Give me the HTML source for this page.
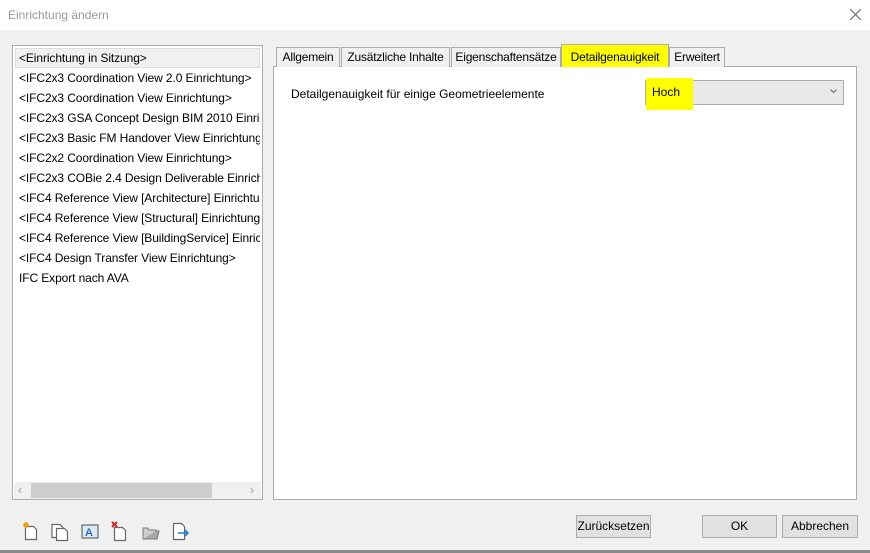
<!DOCTYPE html>
<html><head><style>
*{margin:0;padding:0;box-sizing:border-box}
body{width:870px;height:553px;background:#f0f0f0;font-family:"Liberation Sans",sans-serif;font-size:12px;color:#000;position:relative;overflow:hidden}
.abs{position:absolute}
.title{left:0;top:0;width:870px;height:30px;background:#fff}
.list{left:12px;top:45px;width:251px;height:455px;background:#fff;border:1px solid #adadad;overflow:hidden}
.item{position:absolute;left:6px;white-space:nowrap;height:20px;line-height:20px;width:241px;overflow:hidden;letter-spacing:-0.1px}
.tab{position:absolute;top:47px;height:20px;line-height:19px;border:1px solid #acacac;border-bottom:none;background:#f0f0f0;text-align:center;font-size:12px;white-space:nowrap;letter-spacing:-0.2px}
.btn{position:absolute;top:515px;height:23px;border:1px solid #adadad;background:#e1e1e1;text-align:center;line-height:21px}
</style></head><body>
<div class="abs title"><span class="abs" style="left:8px;top:8px;color:#999;font-size:12px">Einrichtung ändern</span>
<svg class="abs" style="left:850px;top:9px" width="11" height="11"><path d="M0 0L11 11M11 0L0 11" stroke="#666" stroke-width="1.1"/></svg></div>
<div class="abs list">
<div class="abs" style="left:2px;top:2px;width:245px;height:20px;background:#f0f0f0;border:1px solid #ddd"></div>
<div class="item" style="top:2px">&lt;Einrichtung in Sitzung&gt;</div>
<div class="item" style="top:22px">&lt;IFC2x3 Coordination View 2.0 Einrichtung&gt;</div>
<div class="item" style="top:42px">&lt;IFC2x3 Coordination View Einrichtung&gt;</div>
<div class="item" style="top:62px">&lt;IFC2x3 GSA Concept Design BIM 2010 Einric</div>
<div class="item" style="top:82px">&lt;IFC2x3 Basic FM Handover View Einrichtung:</div>
<div class="item" style="top:102px">&lt;IFC2x2 Coordination View Einrichtung&gt;</div>
<div class="item" style="top:122px">&lt;IFC2x3 COBie 2.4 Design Deliverable Einricht</div>
<div class="item" style="top:142px">&lt;IFC4 Reference View [Architecture] Einrichtu</div>
<div class="item" style="top:162px">&lt;IFC4 Reference View [Structural] Einrichtung:</div>
<div class="item" style="top:182px">&lt;IFC4 Reference View [BuildingService] Einrich</div>
<div class="item" style="top:202px">&lt;IFC4 Design Transfer View Einrichtung&gt;</div>
<div class="item" style="top:222px">IFC Export nach AVA</div>
<div class="abs" style="left:1px;top:436px;width:247px;height:17px;background:#f0f0f0"></div>
<div class="abs" style="left:18px;top:437px;width:181px;height:15px;background:#cdcdcd"></div>
<span class="abs" style="left:5px;top:437px;color:#999">‹</span><span class="abs" style="left:237px;top:437px;color:#999">›</span>
</div>
<div class="abs" style="left:273px;top:66px;width:584px;height:434px;background:#fff;border:1px solid #adadad"></div>
<div class="tab" style="left:276px;width:64px">Allgemein</div>
<div class="tab" style="left:341px;width:109px">Zusätzliche Inhalte</div>
<div class="tab" style="left:451px;width:110px">Eigenschaftensätze</div>
<div class="tab" style="left:561px;top:44px;height:23px;width:108px;background:#ffff00;line-height:25px">Detailgenauigkeit</div>
<div class="tab" style="left:669px;width:56px">Erweitert</div>
<div class="abs" style="left:291px;top:87px">Detailgenauigkeit für einige Geometrieelemente</div>
<div class="abs" style="left:645px;top:80px;width:199px;height:25px;background:#e9e9e9;border:1px solid #acacac"></div>
<div class="abs" style="left:646px;top:78px;width:47px;height:32px;background:#ffff00"></div>
<div class="abs" style="left:652px;top:85px">Hoch</div>
<svg class="abs" style="left:830px;top:89px" width="7" height="5"><path d="M0.5 0.5L3.5 3.5L6.5 0.5" stroke="#666" fill="none"/></svg>
<svg class="abs" style="left:20px;top:520px" width="180" height="24">
<g fill="#fff" stroke="#666" stroke-width="1.2"><path d="M5.5 6.5h8l3 3v10h-11z"/><path d="M32 4.5h8l3 3v10h-11z"/><path d="M36.5 8.5h8l3 3v9h-11z"/><rect x="62" y="5" width="16" height="13" fill="#dde8f5"/><path d="M94.5 7.5h8l3 3v10h-11z"/><path d="M153.5 3.5h8l3 3v13h-11z"/></g>
<circle cx="6" cy="5" r="2.8" fill="#f39c12"/>
<text x="65" y="16" font-size="11" font-weight="bold" fill="#2a6ebb" font-family="Liberation Sans">A</text>
<path d="M92 2l5 5M97 2l-5 5" stroke="#e02020" stroke-width="2"/>
<path d="M123 11h16l-2 8h-14z" fill="#aaa" stroke="#777"/><path d="M123 19v-11h5l1 2h7v1" stroke="#777" fill="#ccc"/>
<path d="M158 13h9M165 10l3 3-3 3" stroke="#2a7fd4" stroke-width="1.6" fill="none"/>
</svg>
<div class="btn" style="left:576px;width:75px">Zurücksetzen</div>
<div class="btn" style="left:702px;width:75px">OK</div>
<div class="btn" style="left:782px;width:76px">Abbrechen</div>
<div class="abs" style="left:0;top:550px;width:870px;height:3px;background:#8a8a8a"></div>
</body></html>
